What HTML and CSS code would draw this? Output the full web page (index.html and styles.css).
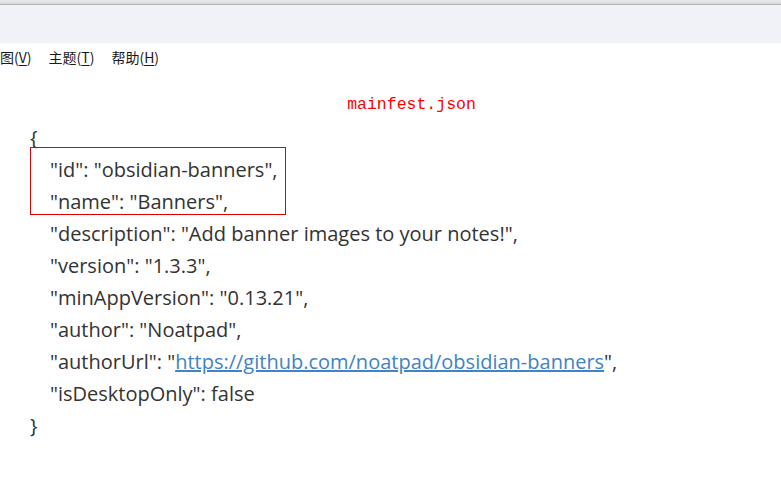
FILE: index.html
```html
<!DOCTYPE html>
<html>
<head>
<meta charset="utf-8">
<link rel="stylesheet" href="styles.css">
</head>
<body>
<div class="topbar"></div>
<div class="menu">
  <span class="menu-item">图(<u>V</u>)</span>
  <span class="menu-item">主题(<u>T</u>)</span>
  <span class="menu-item">帮助(<u>H</u>)</span>
</div>
<div class="title">mainfest.json</div>
<div class="code">
  <div class="mark"></div>
  <div class="line">{</div>
  <div class="line ind">"id": "obsidian-banners",</div>
  <div class="line ind">"name": "Banners",</div>
  <div class="line ind">"description": "Add banner images to your notes!",</div>
  <div class="line ind">"version": "1.3.3",</div>
  <div class="line ind">"minAppVersion": "0.13.21",</div>
  <div class="line ind">"author": "Noatpad",</div>
  <div class="line ind">"authorUrl": "<a class="link" href="#">https://github.com/noatpad/obsidian-banners</a>",</div>
  <div class="line ind">"isDesktopOnly": false</div>
  <div class="line">}</div>
</div>
</body>
</html>
```
FILE: styles.css
```css
html, body {
  margin: 0;
  padding: 0;
  background: #ffffff;
  width: 781px;
  height: 489px;
  overflow: hidden;
}
.topbar {
  height: 37px;
  background: #f1f2f7;
  border-top: 2px solid #e6e6e6;
  box-shadow: inset 0 2px 0 #dcdcdc, inset 0 3px 0 #b2b2b2;
  padding-top: 4px;
}
.menu {
  display: flex;
  gap: 17px;
  height: 27px;
  align-items: center;
  font-family: "Noto Sans CJK SC", "Microsoft YaHei", sans-serif;
  font-size: 14px;
  color: #1a1a1a;
}
.menu-item u {
  text-decoration: underline;
  text-underline-offset: 2px;
}
.title {
  padding-left: 42px;
  margin-top: 25px;
  text-align: center;
  font-family: "Liberation Mono", monospace;
  font-size: 16.5px;
  color: #ff0000;
  line-height: 20px;
}
.code {
  position: relative;
  margin-top: 7px;
  padding-left: 30px;
  font-family: "Open Sans", sans-serif;
  font-size: 20px;
  color: #333333;
}
.line {
  height: 32px;
  line-height: 32px;
  white-space: nowrap;
}
.ind {
  padding-left: 20px;
}
.mark {
  position: absolute;
  left: 30px;
  top: 25px;
  width: 256px;
  height: 68px;
  box-sizing: border-box;
  border: 1px solid #e00000;
}
.link {
  color: #4183c4;
  text-decoration: underline;
}
```
